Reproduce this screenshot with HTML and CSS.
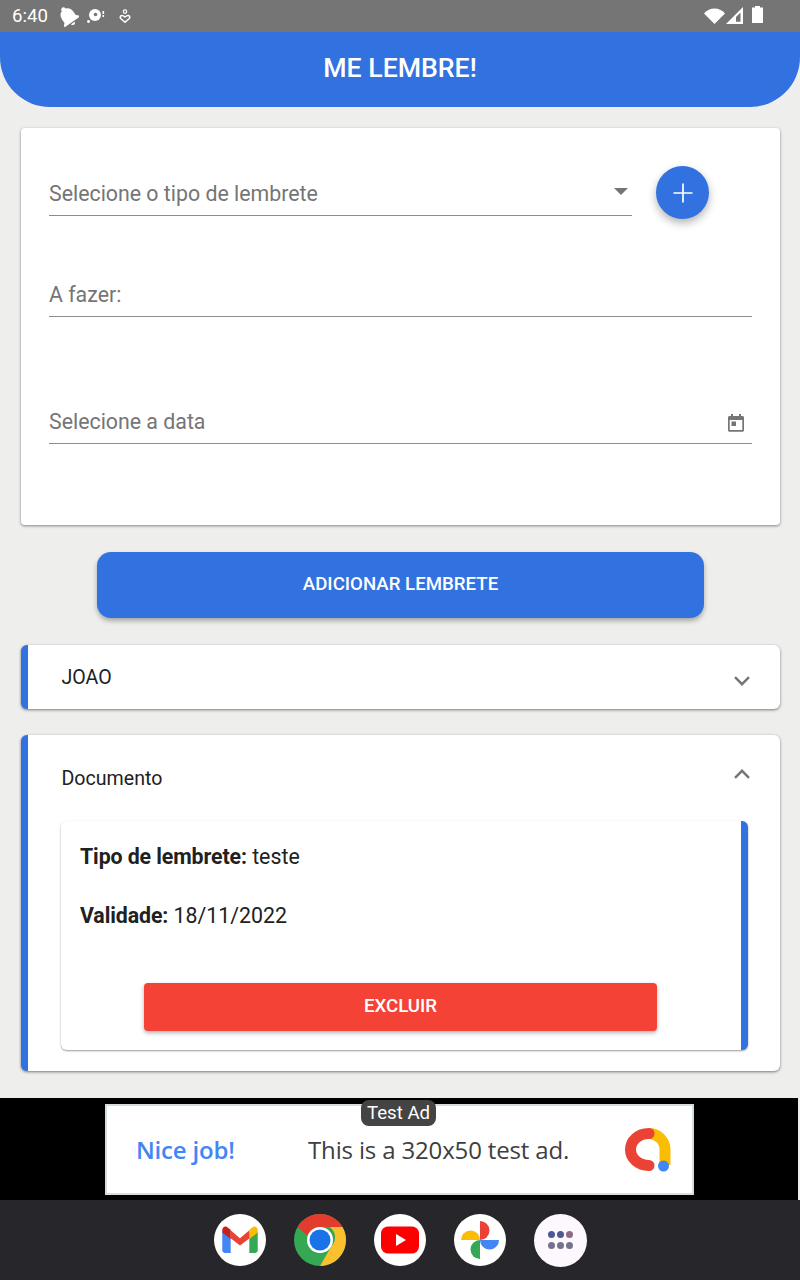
FILE: index.html
```html
<!DOCTYPE html>
<html lang="pt">
<head>
<meta charset="utf-8">
<title>Me Lembre!</title>
<link rel="stylesheet" href="styles.css">
</head>
<body>
<div class="screen">
  <div class="status">
    <span class="time">6:40</span>
    <svg class="st-bell" width="22" height="22" viewBox="0 0 24 24"><g transform="rotate(-35 12 12)"><path fill="#fff" d="M12 23.500c1.300 0 2.400-1 2.400-2.300H9.600c0 1.300 1.100 2.300 2.400 2.300zM19.500 16v-5c0-3.500-2-6.300-5-7.200V3.500C14.500 2 13.400 1 12 1S9.500 2 9.500 3.500v.3c-3 .9-5 3.700-5 7.200v5L2 18.500V20h20v-1.500z"/></g></svg>
    <svg class="st-disc" width="18" height="16" viewBox="0 0 18 16"><circle cx="8" cy="7" r="6" fill="#fff"/><circle cx="8.500" cy="6.500" r="1.800" fill="#757575"/><circle cx="1.500" cy="13.500" r="1.400" fill="#fff"/><rect x="15.500" y="3" width="1.600" height="3" fill="#fff"/><rect x="15.500" y="7" width="1.600" height="2" fill="#fff"/></svg>
    <svg class="st-heart" width="12" height="15" viewBox="0 0 12 15"><circle cx="6" cy="2.600" r="1.700" fill="none" stroke="#fff" stroke-width="1.200"/><path fill="none" stroke="#fff" stroke-width="1.500" d="M6 13.300L1.700 9.500C.6 8.200 1.500 6.500 3 6.500c1.300 0 2.200.8 3 1.500.8-.7 1.700-1.500 3-1.500 1.500 0 2.400 1.700 1.300 3z"/></svg>
    <span class="status-gap"></span>
    <svg class="st-wifi" width="21" height="16" viewBox="0 0 21 16"><path fill="#fff" d="M0 5.500C3 2 6.500 .5 10.500 .5S18 2 21 5.500L10.500 16z"/></svg>
    <svg class="st-signal" width="17" height="17" viewBox="0 0 17 17"><path fill="#fff" d="M0 17L17 0v17zM14.500 5.500L10 10v4.800h4.500z"/><path fill="#757575" d="M10.800 9.800l3-3v7.300h-3z"/></svg>
    <svg class="st-batt" width="11" height="17" viewBox="0 0 11 17"><path fill="#fff" d="M3 0h5v1.500h3V17H0V1.500h3z"/></svg>
  </div>

  <header class="app-head">ME LEMBRE!</header>

  <main class="content">
    <section class="form-card">
      <div class="select-row">
        <div class="field field-select">
          <span class="ph">Selecione o tipo de lembrete</span>
          <span class="caret"></span>
        </div>
        <button class="fab" type="button" aria-label="Adicionar">
          <svg width="20" height="20" viewBox="0 0 20 20"><path stroke="#fff" stroke-width="1.700" fill="none" d="M10 .5v19M.5 10h19"/></svg>
        </button>
      </div>
      <div class="field field-todo"><span class="ph">A fazer:</span></div>
      <div class="field field-date">
        <span class="ph">Selecione a data</span>
        <svg class="cal" width="16" height="18" viewBox="0 0 16 18"><path fill="#757575" d="M3 0h2v2h6V0h2v2h1.500C15.300 2 16 2.700 16 3.500v12.800c0 .8-.7 1.500-1.500 1.500h-13C.7 17.800 0 17.100 0 16.300V3.500C0 2.700.7 2 1.500 2H3zM1.700 6v10.100h12.600V6z"/><rect x="3.500" y="7.500" width="4.500" height="4.500" fill="#757575"/></svg>
      </div>
    </section>

    <button class="add-btn" type="button">ADICIONAR LEMBRETE</button>

    <section class="acc acc-closed">
      <span class="acc-title">JOAO</span>
      <svg class="chev" width="16" height="10" viewBox="0 0 16 10"><path fill="none" stroke="#757575" stroke-width="2.400" d="M1 1.200l7 7 7-7"/></svg>
    </section>

    <section class="acc acc-open">
      <div class="acc-open-head">
        <span class="acc-title">Documento</span>
        <svg class="chev" width="16" height="10" viewBox="0 0 16 10"><path fill="none" stroke="#757575" stroke-width="2.400" d="M1 8.800l7-7 7 7"/></svg>
      </div>
      <div class="detail">
        <p class="line line-first"><b>Tipo de lembrete:</b> teste</p>
        <p class="line line-second"><b>Validade:</b> 18/11/2022</p>
        <button class="del-btn" type="button">EXCLUIR</button>
      </div>
    </section>
  </main>

  <div class="ad-band">
    <span class="ad-tag">Test Ad</span>
    <div class="ad">
      <span class="ad-nice">Nice job!</span>
      <span class="ad-text">This is a 320x50 test ad.</span>
      <svg class="ad-logo" width="46" height="46" viewBox="0 0 46 46">
        <path fill="none" stroke="#fbbc04" stroke-width="11" d="M24 6.500c8 0 16 6.500 16 16V38"/>
        <path fill="none" stroke="#ea4335" stroke-width="11" stroke-linecap="round" d="M24 6.500C13 6.500 5.500 14 5.500 22.500S13 38.500 24 38.500"/>
        <circle cx="38.500" cy="39" r="5.500" fill="#4285f4"/>
      </svg>
    </div>
  </div>

  <nav class="dock">
    <span class="app">
      <svg width="36" height="28" viewBox="0 0 38 30"><path fill="#4285f4" d="M0 6v20c0 1.500 1.200 2.800 2.800 2.800H9V13z"/><path fill="#34a853" d="M29 13v15.800h6.200c1.600 0 2.800-1.300 2.800-2.800V6z"/><path fill="#ea4335" d="M9 4.500L19 13l10-8.500 1 8-11 8.500-10-8z"/><path fill="#c5221f" d="M0 4.500V7l9 7V4L5 1C2.800-.5 0 1.500 0 4.500z"/><path fill="#fbbc04" d="M38 4.500V7l-9 7V4l4-3c2.200-1.500 5 .5 5 3.500z"/></svg>
    </span>
    <span class="app app-chrome">
      <svg width="52" height="52" viewBox="0 0 52 52">
        <circle cx="26" cy="26" r="26" fill="#34a853"/>
        <path fill="#e33b2e" d="M26 0a26 26 0 0 1 22.500 13H26a13 13 0 0 0-12.300 8.800L3.500 13A26 26 0 0 1 26 0z"/>
        <path fill="#fbc02d" d="M48.500 13A26 26 0 0 1 26 52l11.300-19.500A13 13 0 0 0 36 13z"/>
        <circle cx="26" cy="26" r="13" fill="#fff"/>
        <circle cx="26" cy="26" r="10.500" fill="#1a73e8"/>
      </svg>
    </span>
    <span class="app">
      <svg width="38" height="28" viewBox="0 0 38 28"><rect width="38" height="27" y=".5" rx="7" fill="#f00"/><path fill="#fff" d="M15 8l10 6-10 6z"/></svg>
    </span>
    <span class="app">
      <svg width="38" height="38" viewBox="0 0 38 38">
        <path fill="#ea4335" d="M19 0a9.500 9.500 0 0 1 0 19z"/>
        <path fill="#4285f4" d="M19 19h19a9.500 9.500 0 0 1-19 0z"/>
        <path fill="#34a853" d="M19 19v19a9.500 9.500 0 0 1 0-19z"/>
        <path fill="#fbbc04" d="M0 19a9.500 9.500 0 0 1 19 0z"/>
      </svg>
    </span>
    <span class="app app-grid">
      <span class="dot d1"></span><span class="dot d1"></span><span class="dot d2"></span>
      <span class="dot d3"></span><span class="dot d3"></span><span class="dot d3"></span>
    </span>
  </nav>
</div>
</body>
</html>
```

FILE: styles.css
```css
* { box-sizing: border-box; }
html, body { margin: 0; padding: 0; }
body { font-family: Roboto, "Liberation Sans", sans-serif; background: #eeeeec; color: #212121; }
button { font-family: inherit; border: 0; cursor: pointer; }

.screen { width: 800px; height: 1280px; display: flex; flex-direction: column; overflow: hidden; background: #eeeeec; }

.status { height: 32px; background: #757575; display: flex; align-items: center; padding: 0 37px 0 12px; flex: none; }
.time { color: #fff; font-size: 18.67px; width: 45px; }
.st-bell { margin-left: 0; flex: none; }
.st-disc { margin-left: 8px; margin-top: -1px; flex: none; }
.st-heart { margin-left: 14px; flex: none; }
.status-gap { flex: 1; }
.st-wifi { margin-top: -1px; }
.st-signal { margin-left: 1px; margin-top: -1px; }
.st-batt { margin-left: 9px; margin-top: -4px; }

.app-head { height: 75px; flex: none; background: #3171e0; border-radius: 0 0 50px 50px; color: #fff; font-size: 26.67px; font-weight: 500; display: flex; align-items: center; justify-content: center; padding-bottom: 4px; }

.content { flex: 1; display: flex; flex-direction: column; padding: 21px 20px 0 21px; }

.form-card { height: 397px; background: #fff; border-radius: 4px; box-shadow: 0 1px 3px rgba(0,0,0,.45); padding: 38px 28px 0; flex: none; }
.select-row { display: flex; align-items: flex-start; }
.field { display: flex; align-items: center; border-bottom: 1px solid #8c8c8c; }
.field-select { width: 583px; height: 50px; margin-right: 24px; justify-content: space-between; padding-right: 4px; }
.ph { font-size: 21.33px; color: #757575; margin-top: 6px; }
.caret { width: 0; height: 0; border-left: 7px solid transparent; border-right: 7px solid transparent; border-top: 7px solid #757575; margin-top: 2px; }
.fab { width: 53px; height: 53px; border-radius: 50%; background: #3171e0; display: flex; align-items: center; justify-content: center; padding: 0; box-shadow: 0 4px 8px rgba(0,0,0,.3); }
.field-todo { height: 50px; margin-top: 48px; }
.field-date { height: 50px; margin-top: 77px; justify-content: space-between; padding-right: 8px; }
.cal { margin-top: 9px; }

.add-btn { width: 607px; height: 66px; margin: 27px 0 0 76px; padding: 0 0 2px; background: #3171e0; color: #fff; font-size: 18.67px; font-weight: 500; border-radius: 14px; box-shadow: 0 3px 5px rgba(0,0,0,.3); flex: none; }

.acc { background: #fff; border-left: 7px solid #3171e0; border-radius: 6px; box-shadow: 0 1px 3px rgba(0,0,0,.5); flex: none; }
.acc-closed { height: 64px; margin-top: 27px; display: flex; justify-content: space-between; align-items: center; padding: 0 30px 0 33.5px; }
.acc-closed .acc-title { margin-top: 1px; }
.acc-closed .chev { margin-top: 8px; }
.acc-title { font-size: 19.6px; color: #212121; }
.acc-open { height: 336px; margin-top: 26px; padding: 0 32px 0 33px; }
.acc-open-head { height: 86px; display: flex; justify-content: space-between; padding: 32px 0 0 .5px; }
.acc-open-head .chev { margin-right: -2px; margin-top: 2px; }
.detail { height: 229px; background: #fff; border-right: 7px solid #3171e0; border-radius: 6px; box-shadow: 0 1px 2px rgba(0,0,0,.4); padding: 23px 0 0 19px; }
.line { margin: 0; font-size: 21.33px; line-height: 26px; color: #212121; }
.line b { font-weight: 700; letter-spacing: -.1px; }
.line-second { margin-top: 33px; }
.del-btn { display: block; width: 513px; height: 48px; margin: 54px 0 0 64px; padding: 0 0 2px; background: #f44336; color: #fff; font-size: 18.67px; font-weight: 500; border-radius: 4px; box-shadow: 0 2px 4px rgba(0,0,0,.3); }

.ad-band { height: 102px; flex: none; background: #000; margin-right: 2px; margin-top: 27px; position: relative; padding: 6px 0 0 105px; }
.ad-tag { position: absolute; z-index: 1; left: 361px; top: 2px; width: 75px; height: 26px; background: #444; border-radius: 8px; color: #fff; font-size: 18.67px; text-align: center; line-height: 26px; }
.ad { width: 589px; height: 91px; background: #fff; border: 2px solid #d5dde0; display: flex; align-items: center; position: relative; }
.ad-nice { font-family: "Open Sans", Roboto, sans-serif; color: #4285f4; font-size: 24px; font-weight: 600; letter-spacing: -.2px; margin-left: 29px; width: 172px; flex: none; }
.ad-text { font-family: "Open Sans", Roboto, sans-serif; color: #3c4043; font-size: 24px; letter-spacing: -.15px; white-space: nowrap; }
.ad-logo { position: absolute; left: 517.5px; top: 21px; }

.dock { height: 80px; flex: none; background: #26262b; display: flex; justify-content: center; align-items: center; gap: 28px; }
.app { width: 52px; height: 52px; border-radius: 50%; background: #fff; display: flex; align-items: center; justify-content: center; flex: none; }
.app-chrome { background: transparent; }
.app-grid { width: 53px; height: 53px; margin: -.5px; background: #fcf8fd; display: grid; grid-template-columns: repeat(3, 7px); gap: 4px 2px; align-content: center; justify-content: center; }
.dot { width: 7px; height: 7px; border-radius: 50%; }
.d1 { background: #4f5795; }
.d2 { background: #8c6a88; }
.d3 { background: #74728c; }
```
